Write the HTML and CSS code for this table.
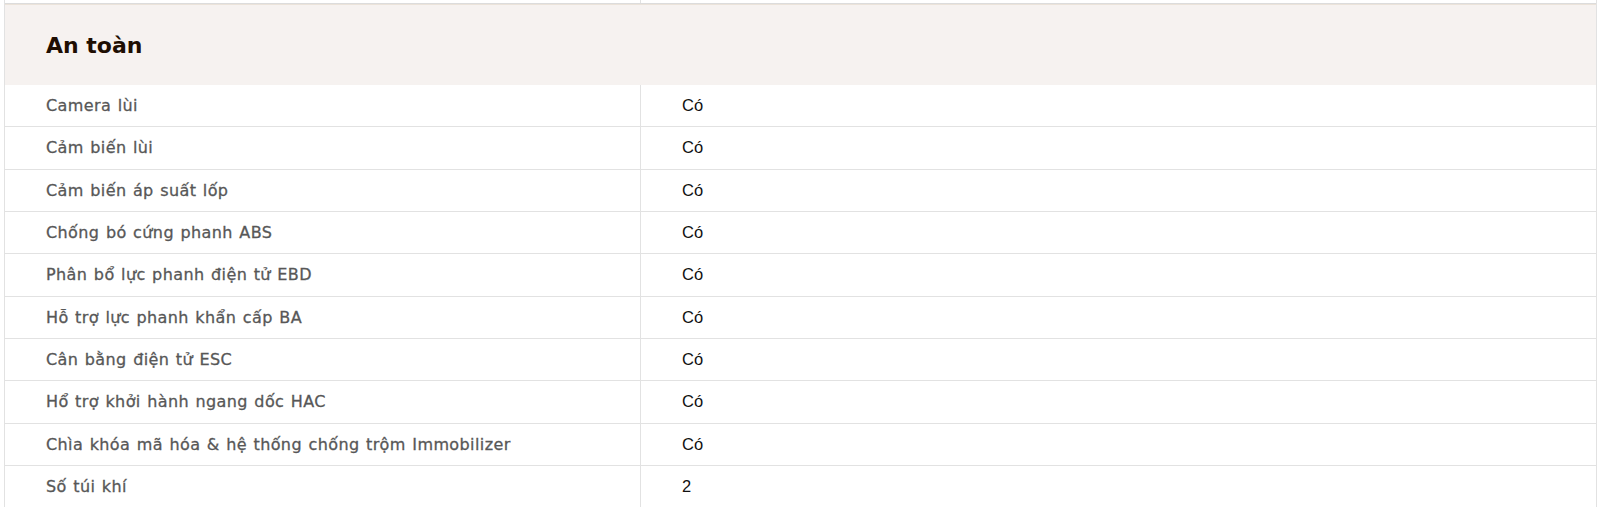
FILE: index.html
```html
<!DOCTYPE html>
<html lang="vi">
<head>
<meta charset="utf-8">
<link rel="stylesheet" href="styles.css">
</head>
<body>
<div class="spec">
  <div class="row prev"><div class="label"></div><div class="value"></div></div>
  <div class="section-head"><h2>An toàn</h2></div>
  <div class="row"><div class="label">Camera lùi</div><div class="value">Có</div></div>
  <div class="row"><div class="label">Cảm biến lùi</div><div class="value">Có</div></div>
  <div class="row"><div class="label">Cảm biến áp suất lốp</div><div class="value">Có</div></div>
  <div class="row"><div class="label">Chống bó cứng phanh ABS</div><div class="value">Có</div></div>
  <div class="row"><div class="label">Phân bổ lực phanh điện tử EBD</div><div class="value">Có</div></div>
  <div class="row"><div class="label">Hỗ trợ lực phanh khẩn cấp BA</div><div class="value">Có</div></div>
  <div class="row"><div class="label">Cân bằng điện tử ESC</div><div class="value">Có</div></div>
  <div class="row"><div class="label">Hổ trợ khởi hành ngang dốc HAC</div><div class="value">Có</div></div>
  <div class="row"><div class="label">Chìa khóa mã hóa &amp; hệ thống chống trộm Immobilizer</div><div class="value">Có</div></div>
  <div class="row"><div class="label">Số túi khí</div><div class="value">2</div></div>
</div>
</body>
</html>
```

FILE: styles.css
```css
html, body {
  margin: 0;
  padding: 0;
  background: #fff;
}
body {
  overflow: hidden;
}
.spec {
  margin: 0 7px 0 4px;
  border-left: 1px solid #e2e2e2;
  border-right: 1px solid #e2e2e2;
}
.row {
  display: grid;
  grid-template-columns: 636px 1fr;
  border-bottom: 1px solid #e2e2e2;
}
.row.prev {
  height: 3px;
  border-bottom: 1px solid #dcdcdc;
}
.row.prev .label, .row.prev .value {
  padding: 0;
}
.label {
  border-right: 1px solid #e2e2e2;
  padding: 10px 0 10px 41px;
  line-height: 21.33px;
  font-family: "DejaVu Sans", sans-serif;
  font-size: 16px;
  letter-spacing: 0.4px;
  word-spacing: 1px;
  color: #575757;
  -webkit-text-stroke: 0.3px #575757;
}
.value {
  padding: 10px 0 10px 41px;
  line-height: 21.33px;
  font-family: "Liberation Sans", Arial, sans-serif;
  font-size: 16.5px;
  color: #111;
}
.section-head {
  background: #f6f2f0;
  border-top: 1px solid #ebe3da;
  height: 80px;
  display: flex;
  align-items: center;
  padding-left: 41px;
}
.section-head h2 {
  margin: 0;
  font-family: "DejaVu Sans", sans-serif;
  font-size: 22px;
  font-weight: 700;
  color: #1e0e02;
}
```
